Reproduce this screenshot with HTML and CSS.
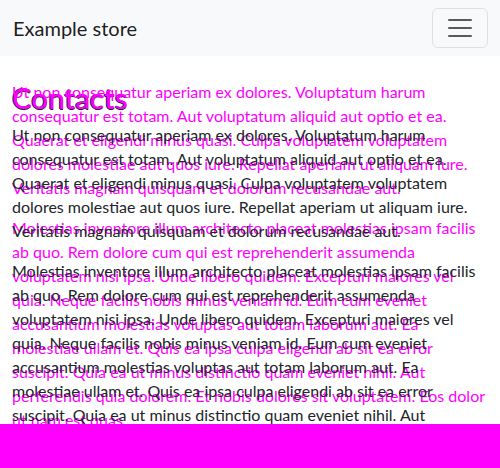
FILE: index.html
```html
<!DOCTYPE html>
<html lang="en">
<head>
<meta charset="utf-8">
<title>Example store</title>
<link rel="stylesheet" href="styles.css">
</head>
<body>
<nav class="navbar">
  <a class="brand" href="#">Example store</a>
  <button class="toggler" type="button" aria-label="Toggle navigation">
    <svg class="toggler-icon" viewBox="0 0 30 30" width="30" height="30"><path stroke="rgba(33,37,41,0.75)" stroke-linecap="round" stroke-miterlimit="10" stroke-width="2" d="M4 7h22M4 15h22M4 23h22"/></svg>
  </button>
</nav>
<main class="container">
  <h1 class="title">Contacts</h1>
  <div class="copy">
    <p>Ut non consequatur aperiam ex dolores. Voluptatum harum consequatur est totam. Aut voluptatum aliquid aut optio et ea. Quaerat et eligendi minus quasi. Culpa voluptatem voluptatem dolores molestiae aut quos iure. Repellat aperiam ut aliquam iure. Veritatis magnam quisquam et dolorum recusandae aut.</p>
    <p>Molestias inventore illum architecto placeat molestias ipsam facilis ab quo. Rem dolore cum qui est reprehenderit assumenda voluptatem nisi ipsa. Unde libero quidem. Excepturi maiores vel quia. Neque facilis nobis minus veniam id. Eum cum eveniet accusantium molestias voluptas aut totam laborum aut. Ea molestiae ullam et. Quis ea ipsa culpa eligendi ab sit ea error suscipit. Quia ea ut minus distinctio quam eveniet nihil. Aut perferendis quia dolorem. Et nobis dolores sit voluptatem. Eos dolor ut nam est quas.</p>
  </div>
  <div class="ghost" aria-hidden="true">
    <p>Ut non consequatur aperiam ex dolores. Voluptatum harum consequatur est totam. Aut voluptatum aliquid aut optio et ea. Quaerat et eligendi minus quasi. Culpa voluptatem voluptatem dolores molestiae aut quos iure. Repellat aperiam ut aliquam iure. Veritatis magnam quisquam et dolorum recusandae aut.</p>
    <p>Molestias inventore illum architecto placeat molestias ipsam facilis ab quo. Rem dolore cum qui est reprehenderit assumenda voluptatem nisi ipsa. Unde libero quidem. Excepturi maiores vel quia. Neque facilis nobis minus veniam id. Eum cum eveniet accusantium molestias voluptas aut totam laborum aut. Ea molestiae ullam et. Quis ea ipsa culpa eligendi ab sit ea error suscipit. Quia ea ut minus distinctio quam eveniet nihil. Aut perferendis quia dolorem. Et nobis dolores sit voluptatem. Eos dolor ut nam est quas.</p>
  </div>
</main>
<div class="band"></div>
</body>
</html>
```
FILE: styles.css
```css
* { box-sizing: border-box; }
html, body { margin: 0; padding: 0; }
body {
  font-family: Lato, "Noto Sans", sans-serif;
  font-size: 16px;
  line-height: 1.5;
  color: #212529;
  background: #fff;
  overflow: hidden;
}
.navbar {
  display: flex;
  align-items: center;
  justify-content: space-between;
  background: #f8f9fa;
  padding: 8px 12px;
  height: 56px;
}
.brand {
  font-size: 20px;
  line-height: 1.5;
  color: rgba(0,0,0,0.9);
  text-decoration: none;
  padding: 5px 0;
  margin-left: 1px;
}
.toggler {
  width: 56px;
  height: 40px;
  padding: 4px 12px;
  background: transparent;
  border: 1px solid rgba(0,0,0,0.1);
  border-radius: 6px;
  display: flex;
  align-items: center;
  justify-content: center;
}
.toggler-icon { display: block; }
.container {
  position: relative;
  padding: 0 12px;
  margin-top: 24px;
}
.title {
  margin: 0 0 8px;
  font-size: 29.5px;
  font-weight: 500;
  line-height: 1.2;
  color: #ff00ff;
  text-shadow: -1px 0 0 #212529, 0 1px 0 #212529;
}
.copy { position: relative; z-index: 2; }
.copy p, .ghost p { margin: 0 0 16px; }
.ghost {
  position: absolute;
  top: 0;
  left: 12px;
  right: 12px;
  color: #ff00ff;
  z-index: 1;
}
.band {
  position: fixed;
  left: 0;
  right: 0;
  bottom: 0;
  height: 44px;
  background: #ff00ff;
  z-index: 5;
}
```
